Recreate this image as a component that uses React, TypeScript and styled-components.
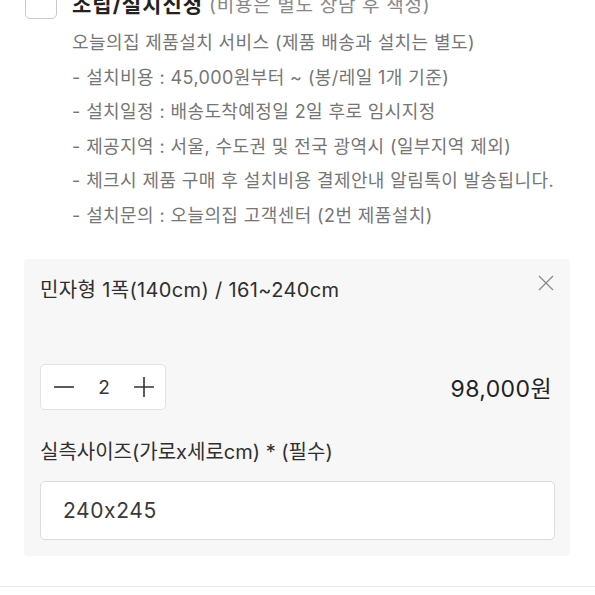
import styled, { createGlobalStyle } from "styled-components";

const GlobalStyle = createGlobalStyle`
  body {
    margin: 0;
    background: #fff;
    font-family: Inter, "Noto Sans CJK KR", sans-serif;
    font-feature-settings: "calt" 0;
    overflow: hidden;
  }
`;

const Page = styled.div`
  width: 595px;
  height: 595px;
  overflow: hidden;
`;

const Section = styled.div`
  padding: 0 25px;
`;

const Header = styled.label`
  display: flex;
  align-items: center;
  gap: 15px;
  height: 32px;
  margin-top: -13px;
`;

const CheckBox = styled.span`
  width: 30px;
  height: 30px;
  border: 1.5px solid #c9c9c9;
  border-radius: 5px;
  background: #fff;
  flex-shrink: 0;
`;

const HeaderTitle = styled.span`
  font-size: 21px;
  font-weight: 700;
  letter-spacing: 1px;
  color: #222;
  white-space: nowrap;
`;

const HeaderNote = styled.span`
  font-size: 19px;
  font-weight: 400;
  letter-spacing: 0.7px;
  color: #888;
  margin-left: 6px;
`;

const Desc = styled.div`
  padding-left: 47px;
  margin-top: 7px;
`;

const DescLine = styled.div`
  font-size: 18px;
  line-height: 34.5px;
  letter-spacing: 0.4px;
  color: #767676;
  white-space: nowrap;
`;

const Panel = styled.div`
  margin: 26px 0 0 -1px;
  width: 546px;
  background: #f7f7f7;
  border-radius: 4px;
  padding: 18px 15px 16px 16px;
  box-sizing: border-box;
`;

const PanelHead = styled.div`
  display: flex;
  justify-content: space-between;
  align-items: flex-start;
`;

const OptionName = styled.div`
  font-size: 20px;
  line-height: 26px;
  letter-spacing: 0.35px;
  color: #2f2f2f;
`;

const CloseButton = styled.button`
  border: none;
  background: none;
  padding: 0;
  margin: -2px 1px 0 0;
  width: 16px;
  height: 16px;
  display: flex;
  cursor: pointer;
`;

const Row = styled.div`
  display: flex;
  justify-content: space-between;
  align-items: center;
  margin-top: 61px;
`;

const Stepper = styled.div`
  display: flex;
  align-items: center;
  justify-content: space-between;
  width: 126px;
  height: 46px;
  box-sizing: border-box;
  padding: 0 10px 0 12px;
  background: #fff;
  border: 1px solid #e2e2e2;
  border-radius: 5px;
`;

const StepButton = styled.button`
  border: none;
  background: none;
  padding: 0;
  width: 22px;
  height: 22px;
  display: flex;
  cursor: pointer;
`;

const Count = styled.span`
  font-size: 19px;
  color: #333;
`;

const Price = styled.div`
  font-size: 23px;
  letter-spacing: 0.4px;
  color: #222;
  margin-right: 3px;
`;

const FieldLabel = styled.div`
  margin-top: 29px;
  font-size: 20px;
  line-height: 26px;
  color: #2f2f2f;
`;

const SizeInput = styled.input`
  display: block;
  margin-top: 16px;
  width: 515px;
  height: 59px;
  box-sizing: border-box;
  padding: 0 22px;
  border: 1px solid #dcdcdc;
  border-radius: 5px;
  background: #fff;
  font-family: Inter, "Noto Sans CJK KR", sans-serif;
  font-feature-settings: "calt" 0;
  font-size: 21px;
  letter-spacing: 0.6px;
  color: #3a3a3a;
  outline: none;
`;

const Divider = styled.hr`
  margin: 30px 0 0;
  border: none;
  border-top: 1px solid #e8e8e8;
`;

const lines = [
  "오늘의집 제품설치 서비스 (제품 배송과 설치는 별도)",
  "- 설치비용 : 45,000원부터 ~ (봉/레일 1개 기준)",
  "- 설치일정 : 배송도착예정일 2일 후로 임시지정",
  "- 제공지역 : 서울, 수도권 및 전국 광역시 (일부지역 제외)",
  "- 체크시 제품 구매 후 설치비용 결제안내 알림톡이 발송됩니다.",
  "- 설치문의 : 오늘의집 고객센터 (2번 제품설치)",
];

const App: React.FC = () => {
  return (
    <Page>
      <GlobalStyle />
      <Section>
        <Header>
          <CheckBox />
          <HeaderTitle>
            조립/설치신청
            <HeaderNote>(비용은 별도 상담 후 책정)</HeaderNote>
          </HeaderTitle>
        </Header>
        <Desc>
          {lines.map((line, idx) => (
            <DescLine key={idx}>{line}</DescLine>
          ))}
        </Desc>

        <Panel>
          <PanelHead>
            <OptionName>민자형 1폭(140cm) / 161~240cm</OptionName>
            <CloseButton aria-label="삭제">
              <svg width="16" height="16" viewBox="0 0 16 16">
                <path d="M1 1L15 15M15 1L1 15" stroke="#8a8a8a" strokeWidth="1.3" fill="none" />
              </svg>
            </CloseButton>
          </PanelHead>

          <Row>
            <Stepper>
              <StepButton aria-label="감소">
                <svg width="22" height="22" viewBox="0 0 22 22">
                  <path d="M1 11H21" stroke="#333" strokeWidth="1.6" />
                </svg>
              </StepButton>
              <Count>2</Count>
              <StepButton aria-label="증가">
                <svg width="22" height="22" viewBox="0 0 22 22">
                  <path d="M1 11H21M11 1V21" stroke="#333" strokeWidth="1.6" />
                </svg>
              </StepButton>
            </Stepper>
            <Price>98,000원</Price>
          </Row>

          <FieldLabel>실측사이즈(가로x세로cm) * (필수)</FieldLabel>
          <SizeInput defaultValue="240x245" />
        </Panel>
      </Section>
      <Divider />
    </Page>
  );
};

export default App;
